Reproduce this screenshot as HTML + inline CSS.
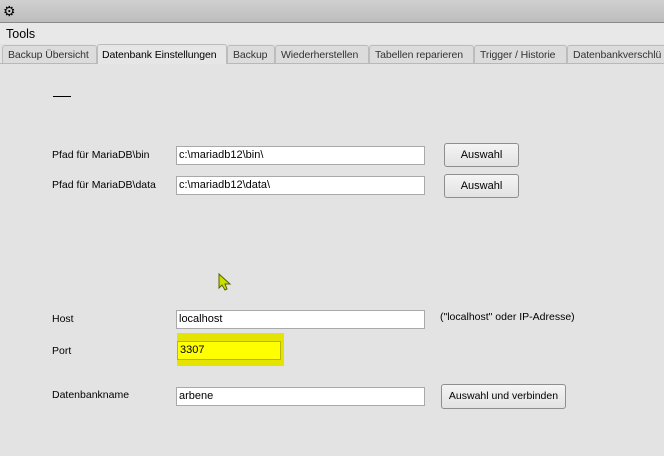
<html><head><style>
body{margin:0;width:664px;height:456px;overflow:hidden;background:#e3e3e3;font-family:"Liberation Sans",sans-serif;font-size:11px;color:#000;position:relative}
.a{position:absolute}
.tb{left:0;top:0;width:664px;height:22px;background:linear-gradient(#d0d0d0,#bdbdbd);border-bottom:1px solid #8a8a8a}
.menu{left:0;top:23px;width:664px;height:21px;background:#e8e8e8}
.tab{top:45px;height:18px;background:#dcdcdc;border:1px solid #bcbcbc;border-bottom:none;border-radius:3px 3px 0 0;color:#333;line-height:18px;padding-left:5px;box-sizing:border-box;font-size:10.5px;white-space:nowrap;overflow:hidden;letter-spacing:-0.1px}
.inp{background:#fff;border:1px solid #a9a9a9;height:19px;box-sizing:border-box;padding-left:2px;line-height:17px;font-size:11px}
.btn{background:linear-gradient(#f4f4f4,#e2e2e2);border:1px solid #8e8e8e;border-radius:3px;box-sizing:border-box;text-align:center;line-height:22px;font-size:11px}
.lb{left:52px;font-size:10.5px}
</style></head><body>
<div class="a tb"></div>
<div class="a" style="left:3px;top:3px;font-size:14px">⚙</div>
<div class="a menu"></div>
<div class="a" style="left:6px;top:27px;font-size:12.5px">Tools</div>
<div class="a" style="left:0;top:63px;width:664px;height:1px;background:#b8b8b8"></div>
<div class="a tab" style="left:2px;width:95px">Backup Übersicht</div>
<div class="a tab" style="left:97px;top:44px;height:20px;width:130px;background:#e6e6e6;color:#000;line-height:20px;padding-left:4px">Datenbank Einstellungen</div>
<div class="a tab" style="left:227px;width:48px">Backup</div>
<div class="a tab" style="left:275px;width:94px">Wiederherstellen</div>
<div class="a tab" style="left:369px;width:105px">Tabellen reparieren</div>
<div class="a tab" style="left:474px;width:93px">Trigger / Historie</div>
<div class="a tab" style="left:567px;width:100px">Datenbankverschlü</div>
<div class="a" style="left:53px;top:96px;width:18px;height:1px;background:#000"></div>
<div class="a lb" style="top:149px">Pfad für MariaDB\bin</div>
<div class="a inp" style="left:176px;top:146px;width:249px">c:\mariadb12\bin\</div>
<div class="a btn" style="left:444px;top:143px;width:75px;height:24px">Auswahl</div>
<div class="a lb" style="top:179px">Pfad für MariaDB\data</div>
<div class="a inp" style="left:176px;top:176px;width:249px">c:\mariadb12\data\</div>
<div class="a btn" style="left:444px;top:174px;width:75px;height:24px">Auswahl</div>
<svg class="a" style="left:218px;top:273px" width="14" height="18"><path d="M1 1 L1 15 L4 12 L7 17 L9 16 L7 11 L12 11 Z" fill="#c8e000" stroke="#556000" stroke-width="1"/></svg>
<div class="a lb" style="top:313px">Host</div>
<div class="a inp" style="left:176px;top:310px;width:249px">localhost</div>
<div class="a" style="left:440px;top:311px;font-size:10.5px">("localhost" oder IP-Adresse)</div>
<div class="a lb" style="top:345px">Port</div>
<div class="a" style="left:177px;top:333px;width:107px;height:33px;background:#e4e400"></div>
<div class="a inp" style="left:177px;top:341px;width:104px;background:#ffff00;border-color:#b8b800">3307</div>
<div class="a lb" style="top:389px">Datenbankname</div>
<div class="a inp" style="left:176px;top:387px;width:249px">arbene</div>
<div class="a btn" style="left:441px;top:384px;width:125px;height:25px;font-size:10.5px">Auswahl und verbinden</div>
</body></html>
